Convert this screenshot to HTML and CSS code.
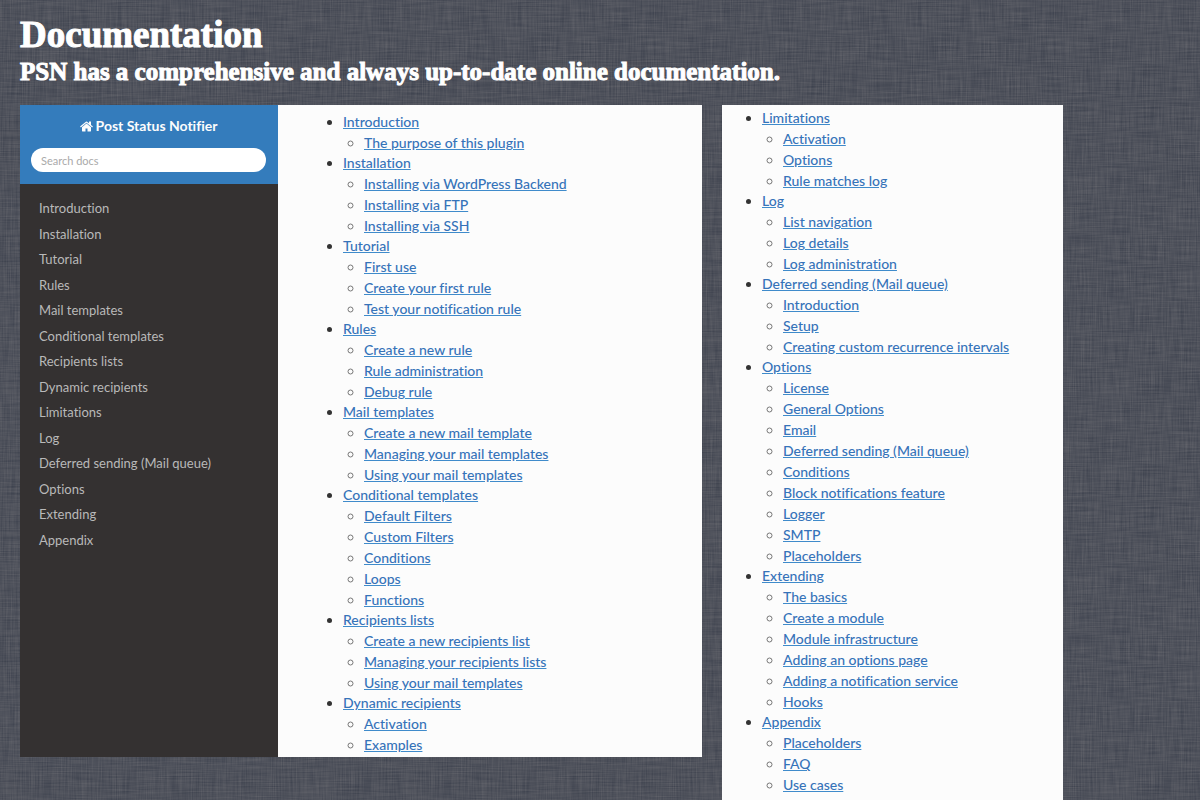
FILE: index.html
```html
<!DOCTYPE html>
<html lang="en">
<head>
<meta charset="utf-8">
<meta name="viewport" content="width=device-width, initial-scale=1">
<title>Documentation</title>
<link rel="stylesheet" href="styles.css">
</head>
<body>
<div class="page">
  <header class="intro">
    <h1 class="title">Documentation</h1>
    <p class="subtitle">PSN has a comprehensive and always up-to-date online documentation.</p>
  </header>
  <main class="panels">
    <section class="docs">
      <aside class="sidebar">
        <div class="brand">
          <a class="brand-link" href="#">
            <svg class="home" viewBox="64 240 1664 1310" aria-hidden="true"><path fill="currentColor" d="M1472 992v480q0 26-19 45t-45 19h-384v-384h-256v384h-384q-26 0-45-19t-19-45v-480q0-1 .5-3t.5-3l575-474 575 474q1 2 1 6zm223-69l-62 74q-8 9-21 11h-3q-13 0-21-7l-692-577-692 577q-12 8-24 7-13-2-21-11l-62-74q-8-10-7-23.500t11-21.500l719-599q32-26 76-26t76 26l244 204v-195q0-14 9-23t23-9h192q14 0 23 9t9 23v408l219 182q10 8 11 21.500t-7 23.500z"/></svg>
            Post Status Notifier</a>
          <input class="search" type="text" placeholder="Search docs" aria-label="Search docs">
        </div>
        <nav aria-label="Chapters">
          <ul class="menu">
            <li><a href="#">Introduction</a></li>
            <li><a href="#">Installation</a></li>
            <li><a href="#">Tutorial</a></li>
            <li><a href="#">Rules</a></li>
            <li><a href="#">Mail templates</a></li>
            <li><a href="#">Conditional templates</a></li>
            <li><a href="#">Recipients lists</a></li>
            <li><a href="#">Dynamic recipients</a></li>
            <li><a href="#">Limitations</a></li>
            <li><a href="#">Log</a></li>
            <li><a href="#">Deferred sending (Mail queue)</a></li>
            <li><a href="#">Options</a></li>
            <li><a href="#">Extending</a></li>
            <li><a href="#">Appendix</a></li>
          </ul>
        </nav>
      </aside>
      <ul class="toc toc-first">
        <li><a href="#">Introduction</a>
          <ul>
            <li><a href="#">The purpose of this plugin</a></li>
          </ul>
        </li>
        <li><a href="#">Installation</a>
          <ul>
            <li><a href="#">Installing via WordPress Backend</a></li>
            <li><a href="#">Installing via FTP</a></li>
            <li><a href="#">Installing via SSH</a></li>
          </ul>
        </li>
        <li><a href="#">Tutorial</a>
          <ul>
            <li><a href="#">First use</a></li>
            <li><a href="#">Create your first rule</a></li>
            <li><a href="#">Test your notification rule</a></li>
          </ul>
        </li>
        <li><a href="#">Rules</a>
          <ul>
            <li><a href="#">Create a new rule</a></li>
            <li><a href="#">Rule administration</a></li>
            <li><a href="#">Debug rule</a></li>
          </ul>
        </li>
        <li><a href="#">Mail templates</a>
          <ul>
            <li><a href="#">Create a new mail template</a></li>
            <li><a href="#">Managing your mail templates</a></li>
            <li><a href="#">Using your mail templates</a></li>
          </ul>
        </li>
        <li><a href="#">Conditional templates</a>
          <ul>
            <li><a href="#">Default Filters</a></li>
            <li><a href="#">Custom Filters</a></li>
            <li><a href="#">Conditions</a></li>
            <li><a href="#">Loops</a></li>
            <li><a href="#">Functions</a></li>
          </ul>
        </li>
        <li><a href="#">Recipients lists</a>
          <ul>
            <li><a href="#">Create a new recipients list</a></li>
            <li><a href="#">Managing your recipients lists</a></li>
            <li><a href="#">Using your mail templates</a></li>
          </ul>
        </li>
        <li><a href="#">Dynamic recipients</a>
          <ul>
            <li><a href="#">Activation</a></li>
            <li><a href="#">Examples</a></li>
          </ul>
        </li>
      </ul>
    </section>
    <section class="more">
      <ul class="toc toc-second">
        <li><a href="#">Limitations</a>
          <ul>
            <li><a href="#">Activation</a></li>
            <li><a href="#">Options</a></li>
            <li><a href="#">Rule matches log</a></li>
          </ul>
        </li>
        <li><a href="#">Log</a>
          <ul>
            <li><a href="#">List navigation</a></li>
            <li><a href="#">Log details</a></li>
            <li><a href="#">Log administration</a></li>
          </ul>
        </li>
        <li><a href="#">Deferred sending (Mail queue)</a>
          <ul>
            <li><a href="#">Introduction</a></li>
            <li><a href="#">Setup</a></li>
            <li><a href="#">Creating custom recurrence intervals</a></li>
          </ul>
        </li>
        <li><a href="#">Options</a>
          <ul>
            <li><a href="#">License</a></li>
            <li><a href="#">General Options</a></li>
            <li><a href="#">Email</a></li>
            <li><a href="#">Deferred sending (Mail queue)</a></li>
            <li><a href="#">Conditions</a></li>
            <li><a href="#">Block notifications feature</a></li>
            <li><a href="#">Logger</a></li>
            <li><a href="#">SMTP</a></li>
            <li><a href="#">Placeholders</a></li>
          </ul>
        </li>
        <li><a href="#">Extending</a>
          <ul>
            <li><a href="#">The basics</a></li>
            <li><a href="#">Create a module</a></li>
            <li><a href="#">Module infrastructure</a></li>
            <li><a href="#">Adding an options page</a></li>
            <li><a href="#">Adding a notification service</a></li>
            <li><a href="#">Hooks</a></li>
          </ul>
        </li>
        <li><a href="#">Appendix</a>
          <ul>
            <li><a href="#">Placeholders</a></li>
            <li><a href="#">FAQ</a></li>
            <li><a href="#">Use cases</a></li>
          </ul>
        </li>
      </ul>
    </section>
  </main>
</div>
</body>
</html>
```
FILE: styles.css
```css
* {
  box-sizing: border-box;
}

body {
  margin: 0;
  font-family: Lato, "Open Sans", sans-serif;
  font-variant-ligatures: no-common-ligatures;
  color: #333;
  background-color: #50535d;
  /* woven linen: horizontal and vertical threads blended together */
  background-image: url("data:image/svg+xml,%3Csvg xmlns='http://www.w3.org/2000/svg' width='400' height='400'%3E%3Cfilter id='w' x='0' y='0' width='100%25' height='100%25' color-interpolation-filters='sRGB'%3E%3CfeTurbulence type='fractalNoise' baseFrequency='0.03 0.8' numOctaves='2' seed='3' stitchTiles='stitch'/%3E%3CfeColorMatrix values='1 0 0 0 0 1 0 0 0 0 1 0 0 0 0 0 0 0 0 1' result='h'/%3E%3CfeTurbulence type='fractalNoise' baseFrequency='0.8 0.03' numOctaves='2' seed='8' stitchTiles='stitch'/%3E%3CfeColorMatrix values='1 0 0 0 0 1 0 0 0 0 1 0 0 0 0 0 0 0 0 1' result='v'/%3E%3CfeComposite in='h' in2='v' operator='arithmetic' k2='0.5' k3='0.5'/%3E%3CfeColorMatrix values='.22 0 0 0 .2 0 .2 0 0 .222 0 0 .17 0 .275 0 0 0 0 1'/%3E%3C/filter%3E%3Crect width='400' height='400' filter='url(%23w)'/%3E%3C/svg%3E");
}

.page {
  display: flex;
  flex-direction: column;
  min-height: 100vh;
  max-width: 1083px;
  padding: 14px 20px 0;
}

.intro {
  padding-bottom: 18px;
  color: #fff;
  font-family: "Liberation Serif", serif;
  font-weight: bold;
  -webkit-text-stroke: 1px #fff;
}

.title {
  margin: 0;
  font-size: 37px;
  line-height: 42px;
}

.subtitle {
  margin: 0;
  padding-top: 1px;
  font-size: 25px;
  line-height: 30px;
}

.panels {
  flex: 1;
  display: grid;
  grid-template-columns: 2fr 1fr;
  gap: 20px;
}

.docs {
  display: flex;
  align-self: start;
  background: #fcfcfc;
}

.sidebar {
  flex: 0 0 258px;
  background: #343131;
}

.brand {
  display: flex;
  flex-direction: column;
  gap: 12px;
  padding: 11px 12px 12px 11px;
  background: #347cbc;
}

.brand-link {
  display: flex;
  align-items: center;
  justify-content: center;
  gap: 3px;
  color: #fcfcfc;
  font-size: 14px;
  font-weight: bold;
  line-height: 20px;
  text-decoration: none;
}

.home {
  width: 13px;
  height: 11px;
}

.search {
  width: 100%;
  height: 24px;
  padding: 0 10px;
  border: 0;
  border-radius: 12px;
  background: #fff;
  font-family: inherit;
  font-size: 11px;
}

.search::placeholder {
  color: #aaa;
}

.menu {
  margin: 0;
  padding: 12px 19px;
  list-style: none;
  font-size: 13px;
  line-height: 26px;
}

.menu li:nth-child(odd) {
  line-height: 25px;
}

.menu a {
  color: #b9b9b9;
  text-decoration: none;
}

.toc {
  flex: 1;
  margin: 0;
  font-size: 14px;
  font-weight: 500;
  line-height: 20px;
}

.toc ul {
  margin: 0;
  padding-left: 21px;
  line-height: 21px;
}

.toc ul li::marker {
  color: #777;
}

.toc a {
  color: #3673b9;
  text-decoration-color: #3f8bcb;
}

.toc-first {
  padding: 7px 20px 2px 65px;
}

.toc-second {
  padding: 3px 20px 0 40px;
}

.more {
  background: #fcfcfc;
}
```
